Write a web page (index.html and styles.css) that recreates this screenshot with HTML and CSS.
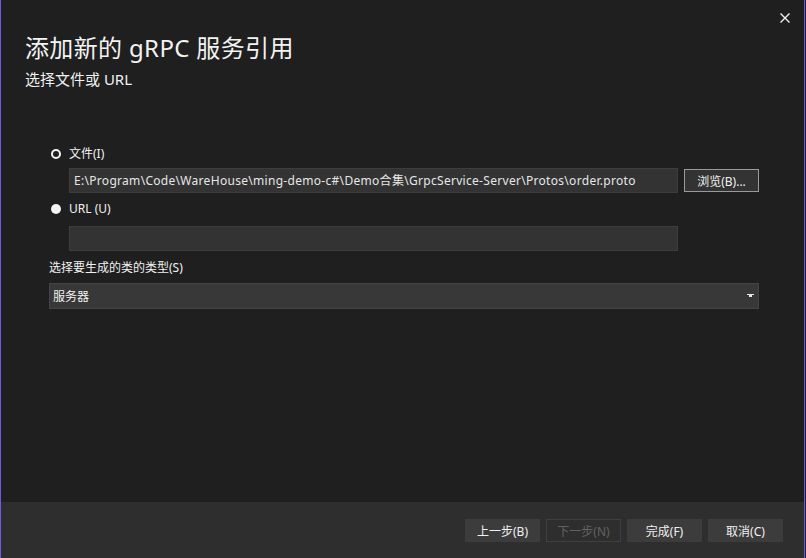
FILE: index.html
```html
<!DOCTYPE html>
<html lang="zh-CN">
<head>
<meta charset="utf-8">
<title>添加新的 gRPC 服务引用</title>
<link rel="stylesheet" href="styles.css">
</head>
<body>
<div class="window">
  <div class="topbar">
    <button class="close" aria-label="关闭">
      <svg width="10" height="10" viewBox="0 0 10 10"><path d="M0.5 0.5 L9.5 9.5 M9.5 0.5 L0.5 9.5" stroke="#f0f0f0" stroke-width="1.4" fill="none"/></svg>
    </button>
  </div>
  <h1 class="title">添加新的 gRPC 服务引用</h1>
  <div class="subtitle">选择文件或 URL</div>

  <div class="form">
    <div class="radio-row">
      <span class="radio checked"></span>
      <span class="label">文件(I)</span>
    </div>
    <div class="file-row first">
      <div class="textbox path">E:\Program\Code\WareHouse\ming-demo-c#\Demo合集\GrpcService-Server\Protos\order.proto</div>
      <button class="btn browse">浏览(B)...</button>
    </div>
    <div class="radio-row">
      <span class="radio filled"></span>
      <span class="label">URL (U)</span>
    </div>
    <div class="file-row second">
      <div class="textbox"></div>
    </div>
    <div class="field-label">选择要生成的类的类型(S)</div>
    <div class="select">
      <span>服务器</span>
      <svg class="caret" width="7" height="4" viewBox="0 0 7 4"><path d="M0 0 H7 V1 H5 V3 H2 V1 H0 Z" fill="#e8e8e8"/></svg>
    </div>
  </div>

  <div class="footer">
    <button class="btn">上一步(B)</button>
    <button class="btn disabled">下一步(N)</button>
    <button class="btn">完成(F)</button>
    <button class="btn">取消(C)</button>
  </div>
</div>
</body>
</html>
```

FILE: styles.css
```css
html, body {
  margin: 0;
  padding: 0;
  background: #1f1f1f;
}
body {
  width: 806px;
  height: 558px;
  overflow: hidden;
  font-family: "Noto Sans", "Noto Sans CJK SC", sans-serif;
  color: #f1f1f1;
}
.window {
  width: 803px;
  height: 558px;
  border-left: 1px solid #6a5ce6;
  border-right: 1px solid #6a5ce6;
  background: #1f1f1f;
  display: flex;
  flex-direction: column;
}
.topbar {
  height: 28px;
  display: flex;
  justify-content: flex-end;
  align-items: flex-start;
  padding-right: 14px;
}
.close {
  margin-top: 13px;
  width: 10px;
  height: 10px;
  padding: 0;
  border: 0;
  background: transparent;
  display: flex;
}
.title {
  margin: 4px 0 0 24px;
  font-size: 24px;
  line-height: 32px;
  font-weight: normal;
  letter-spacing: 0.35px;
  color: #f3f3f3;
}
.subtitle {
  margin: 5px 0 0 24px;
  font-size: 15px;
  line-height: 20px;
  color: #f1f1f1;
}
.form {
  margin-top: 55px;
  padding-left: 48px;
  width: 710px;
  display: flex;
  flex-direction: column;
  font-size: 12px;
}
.radio-row {
  height: 20px;
  display: flex;
  align-items: center;
  padding-left: 2px;
}
.radio {
  width: 10px;
  height: 10px;
  border-radius: 50%;
  box-sizing: border-box;
  margin-right: 8px;
}
.radio.checked {
  border: 2.5px solid #f4f4f4;
  background: #1f1f1f;
}
.radio.filled {
  background: #f4f4f4;
}
.label {
  line-height: 20px;
  color: #f1f1f1;
}
.file-row {
  display: flex;
  align-items: center;
  gap: 6px;
  margin-left: 20px;
}
.file-row.first {
  margin-top: 4px;
  margin-bottom: 6px;
}
.file-row.second {
  margin-top: 7px;
  margin-bottom: 7px;
}
.textbox {
  height: 23px;
  line-height: 23px;
  background: #333333;
  border: 1px solid #3d3d3d;
  padding-left: 4px;
  box-sizing: content-box;
  width: 603px;
  color: #e6e6e6;
  white-space: nowrap;
  overflow: hidden;
  font-size: 12px;
}
.textbox.path {
  letter-spacing: 0.3px;
}
.btn {
  font-family: "Noto Sans", "Noto Sans CJK SC", sans-serif;
  font-size: 12px;
  color: #f1f1f1;
  background: #3c3c3c;
  border: 1px solid #3c3c3c;
  width: 75px;
  height: 23px;
  padding: 0;
  box-sizing: border-box;
}
.browse {
  border-color: #9a9a9a;
  background: #333333;
}
.field-label {
  line-height: 20px;
}
.select {
  margin-top: 5px;
  height: 26px;
  box-sizing: border-box;
  background: #383838;
  border: 1px solid #444444;
  display: flex;
  align-items: center;
  justify-content: space-between;
  padding: 0 4px 0 3px;
  width: 710px;
}
.caret {
  margin-bottom: 1px;
}
.footer {
  margin-top: auto;
  height: 56px;
  background: #2e2e2e;
  display: flex;
  justify-content: flex-end;
  align-items: flex-start;
  gap: 6px;
  padding: 17px 21px 0 0;
  box-sizing: border-box;
}
.btn.disabled {
  background: #2e2e2e;
  border-color: #3f3f3f;
  color: #626262;
}
```
